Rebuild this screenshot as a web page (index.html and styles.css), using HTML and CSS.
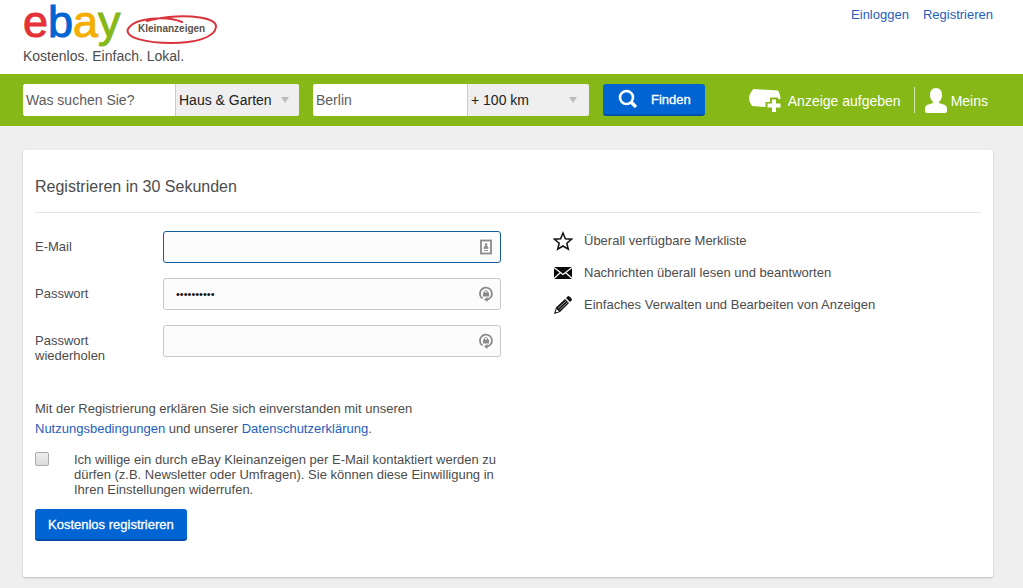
FILE: index.html
```html
<!DOCTYPE html>
<html lang="de">
<head>
<meta charset="utf-8">
<meta name="viewport" content="width=device-width, initial-scale=1">
<title>Registrieren | eBay Kleinanzeigen</title>
<link rel="stylesheet" href="styles.css">
</head>
<body>
<header class="top">
  <div class="wrap top-row">
    <div class="brand">
      <a class="logo" href="#">
        <span class="wordmark"><span class="red">e</span><span class="blue">b</span><span class="yellow">a</span><span class="green">y</span></span>
        <span class="stamp">
          <svg class="ring" viewBox="0 0 92 32" aria-hidden="true"><path d="M56 9C40 2 8 5 2 16c-4 9 20 14 43 14s44-5 45-16C91 4 62 2 43 4 35 5 27 6 21 8" fill="none" stroke="#d9343b" stroke-width="2" stroke-linecap="round"/></svg>
          <span class="stamp-text">Kleinanzeigen</span>
        </span>
      </a>
      <p class="claim">Kostenlos. Einfach. Lokal.</p>
    </div>
    <nav class="account"><a href="#">Einloggen</a><a href="#">Registrieren</a></nav>
  </div>
</header>

<div class="bar">
  <div class="wrap bar-row">
    <form class="search">
      <div class="group what">
        <input class="query" type="text" aria-label="Suchbegriff" placeholder="Was suchen Sie?">
        <span class="pick"><select aria-label="Kategorie"><option>Haus &amp; Garten</option></select><svg class="caret" viewBox="0 0 8 6" aria-hidden="true"><path d="M0 0h8L4 6z" fill="#bdbdbd"/></svg></span>
      </div>
      <div class="group where">
        <input class="query" type="text" aria-label="Ort" placeholder="Berlin">
        <span class="pick"><select aria-label="Umkreis"><option>+ 100 km</option></select><svg class="caret" viewBox="0 0 8 6" aria-hidden="true"><path d="M0 0h8L4 6z" fill="#bdbdbd"/></svg></span>
      </div>
      <button class="button find" type="button">
        <svg width="20" height="20" viewBox="0 0 20 20" aria-hidden="true"><circle cx="8.500" cy="8.500" r="6.500" fill="none" stroke="#fff" stroke-width="2.600"/><path d="M13 13l5 5" stroke="#fff" stroke-width="3.400"/></svg>
        <span>Finden</span>
      </button>
    </form>
    <nav class="actions">
      <a class="post" href="#">
        <svg width="34" height="24" viewBox="0 0 34 24" aria-hidden="true"><path d="M5.500 1L30 2.500Q32 5 32.500 11H30V9.500h-8v4.500h-4.500v5L4 18Q-2.500 9 5.500 1z" fill="#fff"/><path d="M24 11.500h4v4h4.500v4H28V24h-4v-4.500h-4.500v-4H24z" fill="#fff"/></svg>
        <span>Anzeige aufgeben</span>
      </a>
      <a class="mine" href="#">
        <svg width="22" height="25" viewBox="0 0 22 25" aria-hidden="true"><path d="M11 0c4 0 6 3 6 7 0 3-1 5-3 7v1l6 2c2 1 2 3 2 6q0 2-2 2H2q-2 0-2-2c0-3 0-5 2-6l6-2v-1C6 12 5 10 5 7c0-4 2-7 6-7z" fill="#fff"/></svg>
        <span>Meins</span>
      </a>
    </nav>
  </div>
</div>

<main class="wrap content">
  <section class="card">
    <h1>Registrieren in 30 Sekunden</h1>
    <div class="columns">
      <form class="signup">
        <div class="field">
          <label for="email">E-Mail</label>
          <div class="box active"><input id="email" type="email">
            <svg class="key" viewBox="0 0 16 16" aria-hidden="true"><rect x="3" y="1.500" width="10" height="13" fill="#fff" stroke="#8a8a8a" stroke-width="1.800"/><circle cx="8" cy="5.500" r="1.300" fill="#8a8a8a"/><path d="M6 9.500c0-4 4-4 4 0zM6 11.500h4" fill="#8a8a8a" stroke="#999" stroke-width="1"/></svg>
          </div>
        </div>
        <div class="field">
          <label for="pw">Passwort</label>
          <div class="box"><input id="pw" type="password" value="abcdefghij">
            <svg class="key" viewBox="0 0 16 16" aria-hidden="true"><path d="M4.500 12.500A6 6 0 1 1 12.500 11.500Q11 13.500 8 13.500" fill="none" stroke="#8a8a8a" stroke-width="1.800"/><path d="M9.500 11v5L6 13.500z" fill="#8a8a8a"/><rect x="5" y="6.500" width="6" height="4" fill="#8a8a8a"/><path d="M6.500 7V5.500q1.500-2.500 3 0V7" fill="none" stroke="#8a8a8a"/></svg>
          </div>
        </div>
        <div class="field">
          <label for="pw2">Passwort wiederholen</label>
          <div class="box"><input id="pw2" type="password">
            <svg class="key" viewBox="0 0 16 16" aria-hidden="true"><path d="M4.500 12.500A6 6 0 1 1 12.500 11.500Q11 13.500 8 13.500" fill="none" stroke="#8a8a8a" stroke-width="1.800"/><path d="M9.500 11v5L6 13.500z" fill="#8a8a8a"/><rect x="5" y="6.500" width="6" height="4" fill="#8a8a8a"/><path d="M6.500 7V5.500q1.500-2.500 3 0V7" fill="none" stroke="#8a8a8a"/></svg>
          </div>
        </div>
        <p class="terms">Mit der Registrierung erklären Sie sich einverstanden mit unseren <a href="#">Nutzungsbedingungen</a> und unserer <a href="#">Datenschutzerklärung</a>.</p>
        <div class="consent">
          <input id="news" type="checkbox">
          <label for="news">Ich willige ein durch eBay Kleinanzeigen per E-Mail kontaktiert werden zu dürfen (z.B. Newsletter oder Umfragen). Sie können diese Einwilligung in Ihren Einstellungen widerrufen.</label>
        </div>
        <button class="button submit" type="button">Kostenlos registrieren</button>
      </form>
      <ul class="benefits">
        <li><svg width="20" height="20" viewBox="0 0 20 20" aria-hidden="true"><path d="M10 2l2.400 5.700 6.100.500-4.700 4 1.500 6-5.300-3.200-5.300 3.200 1.500-6-4.700-4 6.100-.500z" fill="#fff" stroke="#111" stroke-width="1.500"/></svg><span>Überall verfügbare Merkliste</span></li>
        <li><svg width="20" height="20" viewBox="0 0 20 20" aria-hidden="true"><rect x="1" y="4" width="18" height="12" fill="#0a0a0a"/><path d="M1 4.500l9 7 9-7M1 15.500l6.500-6M19 15.500l-6.500-6" fill="none" stroke="#fff" stroke-width="1.200"/></svg><span>Nachrichten überall lesen und beantworten</span></li>
        <li><svg width="20" height="20" viewBox="0 0 20 20" aria-hidden="true"><path d="M1 19l2-6.500L12 4l4 4-9 9zM13 3l1.500-1.500q1-1 2 0l2 2q1 1 0 2L17 7z" fill="#111"/><path d="M5 13.500l8-7.500M6.500 15l8-7.500" stroke="#bbb" stroke-width=".800"/><path d="M3.500 14l2.500 2.500-2.500.800-.800-.800z" fill="#fff"/></svg><span>Einfaches Verwalten und Bearbeiten von Anzeigen</span></li>
      </ul>
    </div>
  </section>
</main>
</body>
</html>
```
FILE: styles.css
```css
* { box-sizing: border-box; }

body {
  margin: 0;
  background: #efefef;
  color: #4c4c4c;
  font: 13px/15px "Liberation Sans", Arial, sans-serif;
}

a { color: #2560bd; text-decoration: none; }

input, select, button { font-family: inherit; margin: 0; }

.wrap {
  max-width: 1023px;
  margin: 0 auto;
  padding: 0 30px 0 23px;
}

.top { background: #fff; }

.top-row {
  display: flex;
  justify-content: space-between;
  padding-bottom: 9px;
}

.logo { display: flex; gap: 5px; }

.wordmark {
  height: 47px;
  font-size: 45px;
  line-height: 44px;
  -webkit-text-stroke: 1px currentColor;
}

.red { color: #e53238; }
.blue { color: #0064d2; }
.yellow { color: #f5af02; }
.green { color: #86b817; }

.stamp {
  position: relative;
  display: grid;
  place-items: center;
  width: 92px;
  height: 32px;
  margin-top: 13px;
}

.ring { position: absolute; inset: 0; }

.stamp-text { color: #5a5248; font: bold 10px/12px "Liberation Sans Narrow", "Liberation Sans", sans-serif; }

.claim { margin: 0; font-size: 14px; line-height: 18px; }

.account { display: flex; gap: 14px; padding-top: 7px; }

.bar { background: #86b817; }

.bar-row {
  display: flex;
  align-items: center;
  justify-content: space-between;
  padding-top: 10px;
  padding-bottom: 10px;
}

.search { display: flex; gap: 14px; }

.group {
  display: flex;
  height: 32px;
  border-radius: 3px;
  overflow: hidden;
  background: #fff;
}

.what, .where { width: 276px; }

.query {
  flex: 1;
  min-width: 0;
  border: 0;
  padding: 0 3px;
  font-size: 14px;
  background: #fff;
}

.query::placeholder { color: #5c5c5c; opacity: 1; }

.pick {
  position: relative;
  width: 124px;
  border-left: 1px solid #ccc;
}

.where .pick { width: 122px; }

.pick select {
  width: 100%;
  height: 32px;
  appearance: none;
  border: 0;
  border-radius: 0;
  padding: 0 3px;
  background: #efefef;
  color: #222;
  font-size: 14px;
}

.caret {
  position: absolute;
  top: 13px;
  right: 10px;
  width: 8px;
  height: 6px;
  pointer-events: none;
}

.where .caret { right: 12px; }

.button {
  height: 32px;
  border: 0;
  border-bottom: 2px solid #004fa8;
  border-radius: 3px;
  background: #0064d2;
  color: #fff;
  font-size: 13px;
  -webkit-text-stroke: 0.3px #fff;
}

.find {
  display: flex;
  align-items: center;
  gap: 13px;
  padding: 0 14px 0 15px;
}

.actions { display: flex; align-items: center; padding-right: 5px; }

.actions a {
  display: flex;
  align-items: center;
  height: 26px;
  color: #fff;
  font-size: 14px;
}

.actions span { padding-top: 2px; }

.post { gap: 6px; padding-right: 13px; border-right: 1px solid #d6e7ae; }
.mine { gap: 4px; padding-left: 10px; }

.content { padding-top: 24px; padding-bottom: 11px; }

.card {
  min-height: 427px;
  padding: 27px 12px 36px;
  border-radius: 2px;
  background: #fff;
  box-shadow: 0 1px 2px #bbb;
}

h1 {
  margin: 0;
  padding-bottom: 15px;
  border-bottom: 1px solid #e4e4e4;
  font-size: 16px;
  font-weight: normal;
  line-height: 20px;
}

.columns {
  display: grid;
  grid-template-columns: 466px 1fr;
  gap: 52px;
  padding-top: 18px;
}

.field {
  display: grid;
  grid-template-columns: 90px 338px;
  column-gap: 38px;
  height: 32px;
  margin-bottom: 15px;
}

.field label { padding-top: 8px; }

.box { position: relative; }

.box input {
  width: 100%;
  height: 32px;
  border: 1px solid #c8c8c8;
  border-radius: 3px;
  padding: 0 32px 0 12px;
  background: #fcfcfc;
  color: #111;
  font-size: 11px;
}

.box.active input { border-color: #155c9e; }

.key {
  position: absolute;
  top: 8px;
  right: 7px;
  width: 16px;
  height: 16px;
}

.terms { width: 400px; margin: 42px 0 13px; line-height: 20px; }

.consent { display: flex; align-items: flex-start; gap: 25px; }

.consent input {
  appearance: none;
  flex: none;
  width: 14px;
  height: 14px;
  border: 1px solid #aaa;
  border-radius: 2px;
  background: linear-gradient(#eee, #dcdcdc);
}

.consent label { width: 428px; }

.submit { margin-top: 12px; padding: 0 13px; }

.benefits {
  display: grid;
  align-content: start;
  gap: 12px;
  margin: 0;
  padding: 0;
  list-style: none;
}

.benefits li { display: flex; align-items: center; gap: 11px; }
.benefits span { padding-bottom: 2px; }
```
